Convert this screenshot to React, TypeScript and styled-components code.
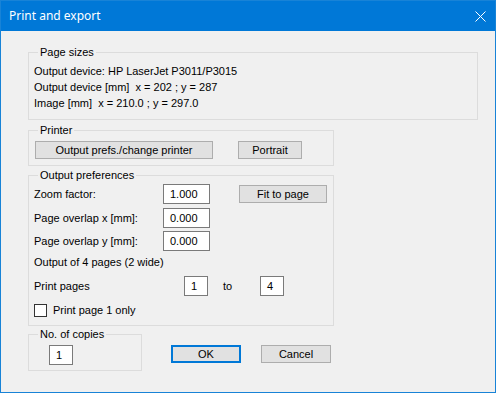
import React from "react";
import styled, { createGlobalStyle } from "styled-components";

const Global = createGlobalStyle`
  html, body { margin: 0; padding: 0; background: #f0f0f0; }
  body { font-family: "Liberation Sans", Arial, sans-serif; font-size: 11px; color: #000; }
  * { box-sizing: border-box; }
`;

const Window = styled.div`
  width: 496px;
  height: 393px;
  border: 1px solid #1883d7;
  background: #f0f0f0;
  display: flex;
  flex-direction: column;
`;

const TitleBar = styled.div`
  height: 30px;
  background: #0078d7;
  color: #fff;
  display: flex;
  align-items: center;
  justify-content: space-between;
  padding: 0 9px 1px 8px;
  font-family: "Noto Sans", "Open Sans", sans-serif;
  font-size: 12px;
`;

const CloseIcon = styled.svg`
  display: block;
  margin-top: 1px;
`;

const Body = styled.div`
  flex: 1;
  padding: 21px 0 0 27px;
  display: flex;
  flex-direction: column;
  align-items: flex-start;
`;

const Group = styled.div<{ $w: number; $pad: string; $mt?: number }>`
  position: relative;
  width: ${(p) => p.$w}px;
  border: 1px solid #dcdcdc;
  padding: ${(p) => p.$pad};
  margin-top: ${(p) => p.$mt ?? 0}px;
  display: flex;
  flex-direction: column;
`;

const Legend = styled.span`
  position: absolute;
  top: -8px;
  left: 9px;
  padding: 0 2px;
  background: #f0f0f0;
  line-height: 14px;
`;

const Line = styled.div`
  height: 16px;
  line-height: 16px;
  white-space: pre;
`;

const Row = styled.div<{ $mt?: number }>`
  display: flex;
  align-items: center;
  height: 20px;
  margin-top: ${(p) => p.$mt ?? 0}px;
  white-space: pre;
`;

const Label = styled.span<{ $w: number }>`
  width: ${(p) => p.$w}px;
  flex: none;
`;

const Field = styled.div<{ $w: number }>`
  width: ${(p) => p.$w}px;
  height: 20px;
  border: 1px solid #7a7a7a;
  background: #fff;
  padding: 0 0 0 6px;
  line-height: 18px;
  flex: none;
`;

const Button = styled.div<{ $w: number; $ml?: number; $default?: boolean }>`
  width: ${(p) => p.$w}px;
  height: 18px;
  margin-left: ${(p) => p.$ml ?? 0}px;
  background: #e1e1e1;
  border: ${(p) => (p.$default ? "2px solid #0078d7" : "1px solid #adadad")};
  display: flex;
  align-items: center;
  justify-content: center;
  flex: none;
  white-space: pre;
`;

const Box = styled.div`
  width: 13px;
  height: 13px;
  border: 1px solid #333;
  background: #fff;
  flex: none;
  margin-right: 6px;
`;

const To = styled.span`
  margin: 0 0 0 15px;
  width: 37px;
  flex: none;
`;

const BottomRow = styled.div`
  display: flex;
  align-items: flex-start;
  margin-top: 8px;
`;

const ButtonPair = styled.div`
  display: flex;
  margin-top: 11px;
  margin-left: 29px;
`;

export default function App() {
  return (
    <>
      <Global />
      <Window>
        <TitleBar>
          <span>Print and export</span>
          <CloseIcon width="11" height="11" viewBox="0 0 11 11">
            <path d="M0.5 0.5 L10.5 10.5 M10.5 0.5 L0.5 10.5" stroke="#fff" strokeWidth="1" fill="none" />
          </CloseIcon>
        </TitleBar>
        <Body>
          <Group $w={450} $pad="10px 0 8px 5px">
            <Legend>Page sizes</Legend>
            <Line>Output device: HP LaserJet P3011/P3015</Line>
            <Line>Output device [mm]  x = 202 ; y = 287</Line>
            <Line>Image [mm]  x = 210.0 ; y = 297.0</Line>
          </Group>

          <Group $w={306} $pad="10px 0 6px 6px" $mt={10}>
            <Legend>Printer</Legend>
            <Row style={{ height: 18 }}>
              <Button $w={178}>Output prefs./change printer</Button>
              <Button $w={64} $ml={25}>Portrait</Button>
            </Row>
          </Group>

          <Group $w={306} $pad="8px 0 5px 5px" $mt={9}>
            <Legend>Output preferences</Legend>
            <Row>
              <Label $w={129}>Zoom factor:</Label>
              <Field $w={47}>1.000</Field>
              <Button $w={88} $ml={29}>Fit to page</Button>
            </Row>
            <Row $mt={4}>
              <Label $w={129}>Page overlap x [mm]:</Label>
              <Field $w={47}>0.000</Field>
            </Row>
            <Row $mt={3}>
              <Label $w={129}>Page overlap y [mm]:</Label>
              <Field $w={47}>0.000</Field>
            </Row>
            <Row $mt={1}>Output of 4 pages (2 wide)</Row>
            <Row $mt={4}>
              <Label $w={150}>Print pages</Label>
              <Field $w={24}>1</Field>
              <To>to</To>
              <Field $w={24}>4</Field>
            </Row>
            <Row $mt={4}>
              <Box />
              <span>Print page 1 only</span>
            </Row>
          </Group>

          <BottomRow>
            <Group $w={114} $pad="10px 0 5px 20px">
              <Legend>No. of copies</Legend>
              <Field $w={24}>1</Field>
            </Group>
            <ButtonPair>
              <Button $w={70} $default>OK</Button>
              <Button $w={70} $ml={20}>Cancel</Button>
            </ButtonPair>
          </BottomRow>
        </Body>
      </Window>
    </>
  );
}
